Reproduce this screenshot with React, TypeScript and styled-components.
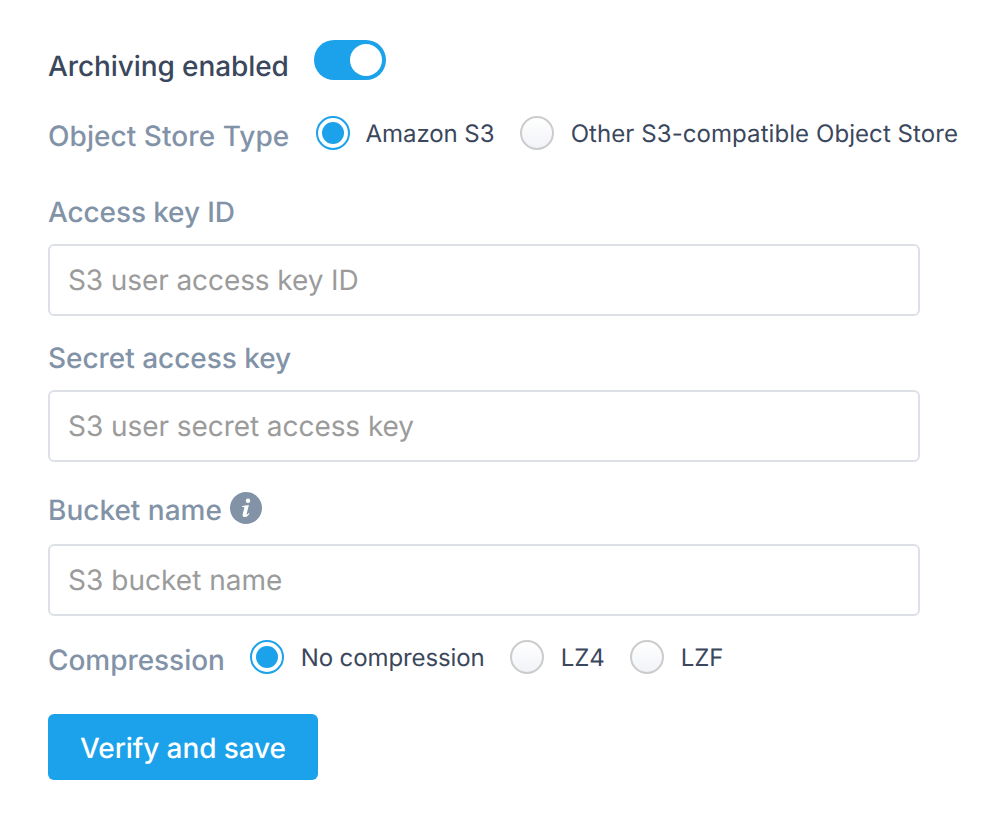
import React from 'react';
import styled, { createGlobalStyle } from 'styled-components';

const GlobalStyle = createGlobalStyle`
  * { box-sizing: border-box; }
  body { margin: 0; background: #fff; font-family: Inter, sans-serif; text-rendering: geometricPrecision; }
`;

const Form = styled.form`
  display: flex;
  flex-direction: column;
  align-items: flex-start;
  width: 1000px;
  height: 824px;
  padding: 40px 0 0 48px;
`;

const Row = styled.div<{ $height: number; $top?: number }>`
  display: flex;
  align-items: flex-start;
  height: ${p => p.$height}px;
  margin-top: ${p => p.$top ?? 0}px;
  white-space: nowrap;
`;

const Label = styled.label<{ $dark?: boolean; $width?: number; $top?: number; $spacing?: number }>`
  width: ${p => (p.$width ? `${p.$width}px` : 'auto')};
  margin-top: ${p => p.$top ?? 0}px;
  flex: none;
  font-size: 28px;
  font-weight: 500;
  line-height: 36px;
  letter-spacing: ${p => p.$spacing ?? 0}px;
  white-space: nowrap;
  color: ${p => (p.$dark ? '#3a475c' : '#8293a8')};
`;

const Switch = styled.button`
  display: flex;
  justify-content: flex-end;
  width: 72px;
  height: 40px;
  padding: 4px;
  border: 0;
  border-radius: 20px;
  background: #1ca2ea;
`;

const Knob = styled.span`
  width: 32px;
  height: 32px;
  border-radius: 50%;
  background: #fff;
`;

const Option = styled.label<{ $width: number; $gap: number }>`
  display: flex;
  gap: ${p => p.$gap}px;
  flex: none;
  width: ${p => p.$width}px;
`;

const Radio = styled.span<{ $on?: boolean }>`
  display: flex;
  align-items: center;
  justify-content: center;
  flex: none;
  width: 34px;
  height: 34px;
  border: 2px solid ${p => (p.$on ? '#1ca2ea' : '#cccccc')};
  border-radius: 50%;
  background: ${p => (p.$on ? '#fff' : 'linear-gradient(#fff, #f1f3f7)')};
`;

const Dot = styled.span`
  width: 22px;
  height: 22px;
  border-radius: 50%;
  background: #1ca2ea;
`;

const OptionText = styled.span<{ $spacing?: number }>`
  margin-top: 1px;
  font-size: 24px;
  line-height: 34px;
  letter-spacing: ${p => p.$spacing ?? 0}px;
  color: #3a475c;
`;

const Input = styled.input<{ $top: number; $spacing?: number }>`
  width: 872px;
  height: 72px;
  margin-top: ${p => p.$top}px;
  padding: 0 18px;
  border: 2px solid #dde1e7;
  border-radius: 6px;
  background: #fff;
  font: 400 28px Inter, sans-serif;
  text-rendering: geometricPrecision;
  letter-spacing: ${p => p.$spacing ?? 0}px;
  outline: 0;
  &::placeholder { color: #9b9b9b; opacity: 1; }
`;

const InfoIcon = styled.svg`
  flex: none;
  width: 32px;
  height: 32px;
`;

const Submit = styled.button`
  width: 270px;
  height: 66px;
  margin-top: 40px;
  padding: 2px 0 0;
  border: 0;
  border-radius: 6px;
  background: #1ca2ea;
  color: #fff;
  font: 500 28px Inter, sans-serif;
  text-rendering: geometricPrecision;
  letter-spacing: -0.1px;
`;

type ChoiceProps = { text: string; width: number; on?: boolean; spacing?: number; gap?: number };

const Choice = ({ text, width, on, spacing, gap = 16.7 }: ChoiceProps) => (
  <Option $width={width} $gap={gap}>
    <Radio $on={on}>{on && <Dot />}</Radio>
    <OptionText $spacing={spacing}>{text}</OptionText>
  </Option>
);

export default function App() {
  return (
    <>
      <GlobalStyle />
      <Form>
        <Row $height={40}>
          <Label $dark $width={266} $top={8} $spacing={-0.09}>Archiving enabled</Label>
          <Switch type="button" aria-label="Archiving enabled"><Knob /></Switch>
        </Row>
        <Row $height={40} $top={36}>
          <Label $width={268} $top={2} $spacing={0.06}>Object Store Type</Label>
          <Choice text="Amazon S3" width={204} on gap={15.6} spacing={-0.08} />
          <Choice text="Other S3-compatible Object Store" width={440} spacing={0.07} />
        </Row>
        <Label $top={38} $spacing={-0.12}>Access key ID</Label>
        <Input $top={14} $spacing={-0.09} placeholder="S3 user access key ID" />
        <Label $top={24} $spacing={-0.04}>Secret access key</Label>
        <Input $top={14} $spacing={-0.06} placeholder="S3 user secret access key" />
        <Row $height={36} $top={30}>
          <Label $width={182}>Bucket name</Label>
          <InfoIcon viewBox="0 0 32 32">
            <circle cx="16" cy="16" r="16" fill="#8293a8" />
            <circle cx="18" cy="8.8" r="2.2" fill="#fff" />
            <path d="M12.3 14 L18.9 12.9 L16.8 21.3 Q16.4 22.8 17.2 22.5 Q18.2 21.9 18.8 21 L19.5 21.6 Q17.6 25.1 14.8 25.1 Q12 25 12.7 22.1 L14.3 16 Q14.6 15 13.6 15 L12 15 Z" fill="#fff" />
          </InfoIcon>
        </Row>
        <Input $top={16} $spacing={0.03} placeholder="S3 bucket name" />
        <Row $height={34} $top={24}>
          <Label $width={202} $top={2} $spacing={-0.05}>Compression</Label>
          <Choice text="No compression" width={260} on spacing={-0.1} />
          <Choice text="LZ4" width={120} spacing={-0.1} />
          <Choice text="LZF" width={120} />
        </Row>
        <Submit type="button">Verify and save</Submit>
      </Form>
    </>
  );
}
